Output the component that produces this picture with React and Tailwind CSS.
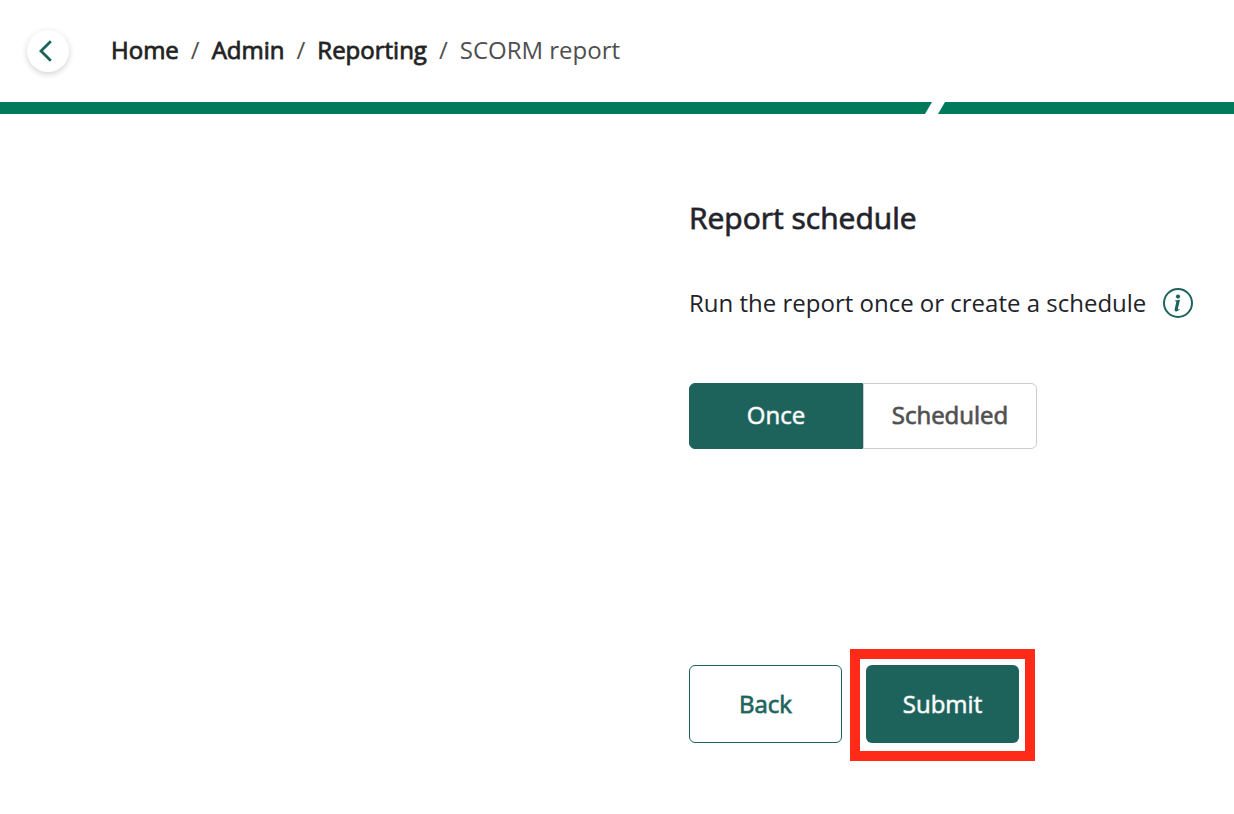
import React, { useState } from "react";

const trail = ["Home", "Admin", "Reporting"];
const modes = ["Once", "Scheduled"];

function Header() {
  return (
    <header className="flex h-[102px] items-center gap-[42px] pl-[27px]">
      <button
        type="button"
        aria-label="Go back"
        className="flex size-[42px] shrink-0 items-center justify-center rounded-full bg-white shadow-[0_2px_6px_rgba(0,0,0,0.18)]"
      >
        <svg viewBox="0 0 42 42" className="size-full" fill="none" stroke="#1d635c" strokeWidth="2.8">
          <path d="M23.8 11.3 L14 21 L23.8 30.7" />
        </svg>
      </button>
      <nav aria-label="Breadcrumb" className="pb-0.5">
        <ol className="flex items-center text-2xl text-[#4f4f4f]">
          {trail.map((name) => (
            <li key={name} className="flex">
              <a href="#" className="text-[#212121] [-webkit-text-stroke:1px_#212121cc]">
                {name}
              </a>
              <span aria-hidden="true" className="px-3">
                /
              </span>
            </li>
          ))}
          <li aria-current="page">SCORM report</li>
        </ol>
      </nav>
    </header>
  );
}

function Divider() {
  return (
    <div className="grid h-3 grid-cols-[938fr_296fr]" aria-hidden="true">
      <div className="bg-[#007a5a] [clip-path:polygon(0_0,calc(100%_-_6px)_0,calc(100%_-_13px)_100%,0_100%)]" />
      <div className="bg-[#007a5a] [clip-path:polygon(7px_0,100%_0,100%_100%,0_100%)]" />
    </div>
  );
}

function InfoIcon() {
  return (
    <svg viewBox="0 0 30 30" className="size-[30px]" fill="none" stroke="#1d635c">
      <circle cx="15" cy="15" r="14" strokeWidth="2" />
      <circle cx="15" cy="8.6" r="2.1" fill="#1d635c" stroke="none" />
      <path
        d="M12 12.4 L17 11.8 L14.9 20.6 C14.7 21.6 15 21.8 16.6 20.9 L16.9 21.6 C15.5 22.9 14.2 23.5 13 23.4 C11.8 23.3 11.4 22.4 11.7 21 L13.3 14 C13.4 13.3 13.1 13.2 11.9 13.2 Z"
        fill="#1d635c"
        stroke="none"
      />
    </svg>
  );
}

export default function App() {
  const [mode, setMode] = useState("Once");
  return (
    <div className="min-h-screen bg-white font-['Open_Sans',sans-serif]">
      <Header />
      <Divider />
      <main className="grid grid-cols-[689fr_545fr] pt-[82px] pb-[71px]">
        <section className="col-start-2 text-[#22222a]">
          <h1 className="text-[30px] leading-[44px] [-webkit-text-stroke:1px_#22222ac0]">
            Report schedule
          </h1>
          <div className="mt-[45px] flex items-center gap-[17px] text-2xl leading-9">
            <p className="whitespace-nowrap">Run the report once or create a schedule</p>
            <button type="button" aria-label="More information" className="shrink-0">
              <InfoIcon />
            </button>
          </div>
          <div role="group" aria-label="Schedule type" className="mt-[62px] flex text-2xl">
            {modes.map((name) => (
              <button
                key={name}
                type="button"
                aria-pressed={mode === name}
                onClick={() => setMode(name)}
                className={
                  "h-[66px] w-[174px] border pb-0.5 first:rounded-l-md last:rounded-r-md " +
                  (mode === name
                    ? "border-[#1d635c] bg-[#1d635c] text-white [-webkit-text-stroke:1px_#ffffff90]"
                    : "border-[#cccccc] bg-white text-[#4f4f4f] [-webkit-text-stroke:1px_#4f4f4fc0]")
                }
              >
                {name}
              </button>
            ))}
          </div>
          <div className="mt-[216px] flex gap-6 text-2xl">
            <button
              type="button"
              className="h-[78px] w-[153px] rounded-md border border-[#1d635c] bg-white text-[#1d635c] [-webkit-text-stroke:1px_#1d635cc0]"
            >
              Back
            </button>
            <div className="-mx-4 -mt-4 -mb-[18px] border-10 border-[#ff2a17] px-1.5 pt-1.5 pb-2">
              <button
                type="submit"
                className="block h-[78px] w-[153px] rounded-md bg-[#1d635c] text-white [-webkit-text-stroke:1px_#ffffff90]"
              >
                Submit
              </button>
            </div>
          </div>
        </section>
      </main>
    </div>
  );
}
